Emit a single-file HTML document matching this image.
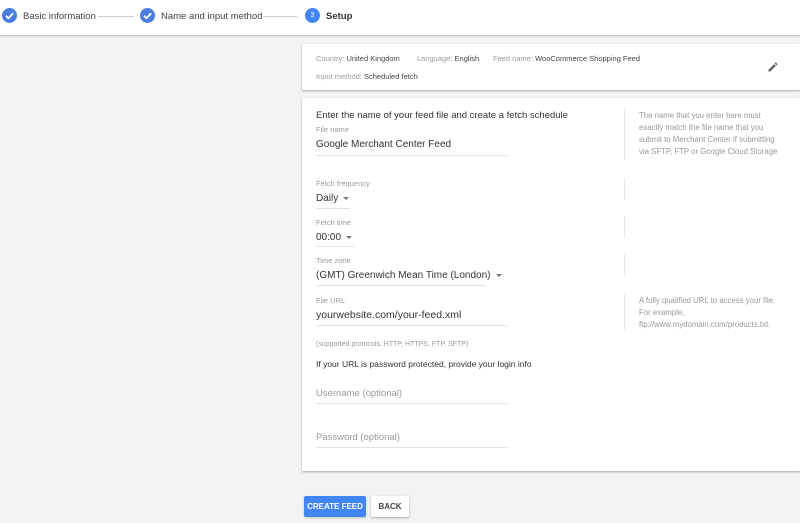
<!DOCTYPE html>
<html><head><style>
*{margin:0;padding:0;box-sizing:border-box}
body{width:800px;height:523px;background:#f3f3f3;font-family:"Liberation Sans",Arial,sans-serif;position:relative;overflow:hidden;color:#333}
.a{position:absolute;white-space:nowrap}
.hdr{position:absolute;left:0;top:0;width:800px;height:35px;background:#fff;box-shadow:0 1px 2px rgba(0,0,0,.25)}
.chk{position:absolute;width:15px;height:15px;border-radius:50%;background:#4a7fe0}
.card{position:absolute;background:#fff;box-shadow:0 1px 2px rgba(0,0,0,.3)}
.lbl{font-size:7.5px;color:#999}
.val{font-size:10px;color:#333}
.in{font-size:10px;color:#333}
.ul{position:absolute;height:1px;background:#e2e2e2}
.vl{position:absolute;width:1px;background:#e6e6e6}
.hint{font-size:7.8px;color:#999;line-height:12px;white-space:normal}
.tri{display:inline-block;width:0;height:0;border-left:3px solid transparent;border-right:3px solid transparent;border-top:3px solid #777;vertical-align:middle;margin-left:5px}
</style></head><body>
<div class="hdr">
 <div class="chk" style="left:2px;top:8px"><svg width="15" height="15"><path d="M4 7.8l2.4 2.4 4.8-5" stroke="#fff" stroke-width="1.8" fill="none"/></svg></div>
 <div class="a" style="left:23px;top:11px;font-size:9.5px;color:#444">Basic information</div>
 <div class="a" style="left:98px;top:16px;width:36px;height:1px;background:#ccc"></div>
 <div class="chk" style="left:140px;top:8px"><svg width="15" height="15"><path d="M4 7.8l2.4 2.4 4.8-5" stroke="#fff" stroke-width="1.8" fill="none"/></svg></div>
 <div class="a" style="left:161px;top:11px;font-size:9.5px;color:#444">Name and input method</div>
 <div class="a" style="left:263px;top:16px;width:34px;height:1px;background:#ccc"></div>
 <div class="chk" style="left:305px;top:8px;background:#4285f4;color:#fff;font-size:7px;text-align:center;line-height:15px">3</div>
 <div class="a" style="left:326px;top:11px;font-size:9.5px;color:#333;font-weight:bold">Setup</div>
</div>

<div class="card" style="left:302px;top:44px;width:498px;height:46px">
 <div class="a" style="left:14px;top:10px;font-size:7.5px;color:#999">Country: <span style="color:#444">United Kingdom</span></div>
 <div class="a" style="left:115px;top:10px;font-size:7.5px;color:#999">Language: <span style="color:#444">English</span></div>
 <div class="a" style="left:191px;top:10px;font-size:7.5px;color:#999">Feed name: <span style="color:#444">WooCommerce Shopping Feed</span></div>
 <div class="a" style="left:14px;top:28px;font-size:7.5px;color:#999">Input method: <span style="color:#444">Scheduled fetch</span></div>
 <svg class="a" style="left:465px;top:17px" width="12" height="12" viewBox="0 0 24 24"><path d="M3 17.25V21h3.75L17.8 9.94l-3.75-3.75L3 17.25zM20.7 7.04a1 1 0 000-1.41l-2.34-2.34a1 1 0 00-1.41 0l-1.83 1.83 3.75 3.75 1.83-1.83z" fill="#666"/></svg>
</div>

<div class="card" style="left:302px;top:98px;width:498px;height:373px">
 <div class="a" style="left:14px;top:12px;font-size:9.5px;color:#333">Enter the name of your feed file and create a fetch schedule</div>
 <div class="a lbl" style="left:14px;top:27px">File name</div>
 <div class="a in" style="left:14px;top:41px">Google Merchant Center Feed</div>
 <div class="ul" style="left:14px;top:57px;width:191px"></div>
 <div class="vl" style="left:322px;top:10px;height:52px"></div>
 <div class="a hint" style="left:337px;top:12px;width:146px">The name that you enter here must exactly match the file name that you submit to Merchant Center if submitting via SFTP, FTP or Google Cloud Storage</div>

 <div class="a lbl" style="left:14px;top:81px">Fetch frequency</div>
 <div class="a val" style="left:14px;top:95px">Daily<span class="tri"></span></div>
 <div class="ul" style="left:14px;top:110px;width:34px"></div>
 <div class="vl" style="left:322px;top:80px;height:22px"></div>

 <div class="a lbl" style="left:14px;top:120px">Fetch time</div>
 <div class="a val" style="left:14px;top:134px">00:00<span class="tri"></span></div>
 <div class="ul" style="left:14px;top:148px;width:38px"></div>
 <div class="vl" style="left:322px;top:118px;height:22px"></div>

 <div class="a lbl" style="left:14px;top:158px">Time zone</div>
 <div class="a val" style="left:14px;top:172px">(GMT) Greenwich Mean Time (London)<span class="tri"></span></div>
 <div class="ul" style="left:14px;top:187px;width:170px"></div>
 <div class="vl" style="left:322px;top:156px;height:22px"></div>

 <div class="a lbl" style="left:14px;top:198px">File URL</div>
 <div class="a in" style="left:14px;top:211px;font-size:10.5px">yourwebsite.com/your-feed.xml</div>
 <div class="ul" style="left:14px;top:227px;width:191px"></div>
 <div class="vl" style="left:322px;top:196px;height:36px"></div>
 <div class="a hint" style="left:337px;top:197px;width:138px">A fully qualified URL to access your file. For example, ftp://www.mydomain.com/products.txt.</div>

 <div class="a lbl" style="left:14px;top:243px;font-size:7px">(supported protocols: HTTP, HTTPS, FTP, SFTP)</div>
 <div class="a" style="left:14px;top:261px;font-size:8.5px;color:#333">If your URL is password protected, provide your login info</div>
 <div class="a" style="left:14px;top:290px;font-size:9.5px;color:#999">Username (optional)</div>
 <div class="ul" style="left:14px;top:305px;width:191px"></div>
 <div class="a" style="left:14px;top:334px;font-size:9.5px;color:#999">Password (optional)</div>
 <div class="ul" style="left:14px;top:349px;width:191px"></div>
</div>

<div class="a" style="left:304px;top:496px;width:62px;height:21px;background:#4285f4;color:#fff;font-size:8px;font-weight:bold;text-align:center;line-height:21px;border-radius:2px;box-shadow:0 1px 2px rgba(0,0,0,.2)">CREATE FEED</div>
<div class="a" style="left:371px;top:496px;width:38px;height:21px;background:#fff;color:#444;font-size:8px;font-weight:bold;text-align:center;line-height:21px;border-radius:2px;box-shadow:0 1px 2px rgba(0,0,0,.3)">BACK</div>
</body></html>
